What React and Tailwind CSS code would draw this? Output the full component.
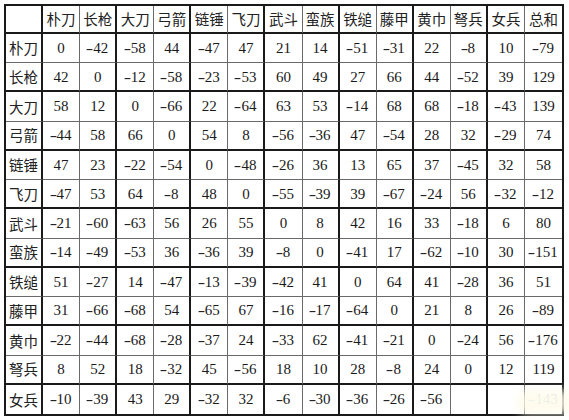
import React from "react";

const headers = ["朴刀","长枪","大刀","弓箭","链锤","飞刀","武斗","蛮族","铁缒","藤甲","黄巾","弩兵","女兵","总和"];
const rows = [
  ["朴刀", ["0","-42","-58","44","-47","47","21","14","-51","-31","22","-8","10","-79"]],
  ["长枪", ["42","0","-12","-58","-23","-53","60","49","27","66","44","-52","39","129"]],
  ["大刀", ["58","12","0","-66","22","-64","63","53","-14","68","68","-18","-43","139"]],
  ["弓箭", ["-44","58","66","0","54","8","-56","-36","47","-54","28","32","-29","74"]],
  ["链锤", ["47","23","-22","-54","0","-48","-26","36","13","65","37","-45","32","58"]],
  ["飞刀", ["-47","53","64","-8","48","0","-55","-39","39","-67","-24","56","-32","-12"]],
  ["武斗", ["-21","-60","-63","56","26","55","0","8","42","16","33","-18","6","80"]],
  ["蛮族", ["-14","-49","-53","36","-36","39","-8","0","-41","17","-62","-10","30","-151"]],
  ["铁缒", ["51","-27","14","-47","-13","-39","-42","41","0","64","41","-28","36","51"]],
  ["藤甲", ["31","-66","-68","54","-65","67","-16","-17","-64","0","21","8","26","-89"]],
  ["黄巾", ["-22","-44","-68","-28","-37","24","-33","62","-41","-21","0","-24","56","-176"]],
  ["弩兵", ["8","52","18","-32","45","-56","18","10","28","-8","24","0","12","119"]],
  ["女兵", ["-10","-39","43","29","-32","32","-6","-30","-36","-26","-56","","","-143"]],
];

const cjk = { fontFamily: '"Noto Sans CJK SC", "Noto Sans", sans-serif' };
const num = { fontFamily: '"Liberation Serif", "DejaVu Serif", serif' };

function NumText({ v }) {
  if (v.startsWith("-")) {
    return (
      <span>
        <span className="inline-block scale-x-[1.5] mr-[1px]">-</span>
        {v.slice(1)}
      </span>
    );
  }
  return <span>{v}</span>;
}

function Cell({ r, c, children, kind, faded }) {
  const right = c === 14
    ? ""
    : c % 2 === 0
      ? "border-r-2 border-r-[#1a1a1a]"
      : "border-r border-r-[#6a6a6a]";
  const bottom = r === 13
    ? ""
    : r % 2 === 0
      ? "border-b-2 border-b-[#1a1a1a]"
      : "border-b border-b-[#6a6a6a]";
  const color = faded ? "text-[#a9cde3]" : kind === "cjk" ? "text-[#222]" : "text-[#1a1a1a]";
  return (
    <div
      className={`flex items-center justify-center overflow-hidden ${right} ${bottom} ${
        kind === "cjk" ? "text-[14.5px]" : "text-[15px]"
      } ${color}`}
      style={kind === "cjk" ? cjk : num}
    >
      {children}
    </div>
  );
}

export default function App() {
  const cells = [];
  cells.push(<Cell key="h0" r={0} c={0} kind="cjk"></Cell>);
  headers.forEach((h, i) =>
    cells.push(
      <Cell key={"h" + (i + 1)} r={0} c={i + 1} kind="cjk">
        {h}
      </Cell>
    )
  );
  rows.forEach(([name, vals], ri) => {
    cells.push(
      <Cell key={"r" + ri} r={ri + 1} c={0} kind="cjk">
        {name}
      </Cell>
    );
    vals.forEach((v, ci) =>
      cells.push(
        <Cell key={ri + "-" + ci} r={ri + 1} c={ci + 1} kind="num" faded={ri === 12 && ci === 13}>
          {v ? <NumText v={v} /> : null}
        </Cell>
      )
    );
  });

  return (
    <div className="w-[569px] h-[420px] bg-white overflow-hidden">
      <div className="relative ml-[4px] mt-[4px] w-[560px] h-[412px] border-2 border-[#1a1a1a] grid grid-cols-[repeat(15,minmax(0,1fr))] grid-rows-[28px_repeat(13,minmax(0,1fr))]">
        {cells}
        <div className="absolute left-[510px] top-[384px] w-[60px] h-[24px] rounded-full bg-[#fffbea] opacity-80 blur-[4px]"></div>
      </div>
    </div>
  );
}
